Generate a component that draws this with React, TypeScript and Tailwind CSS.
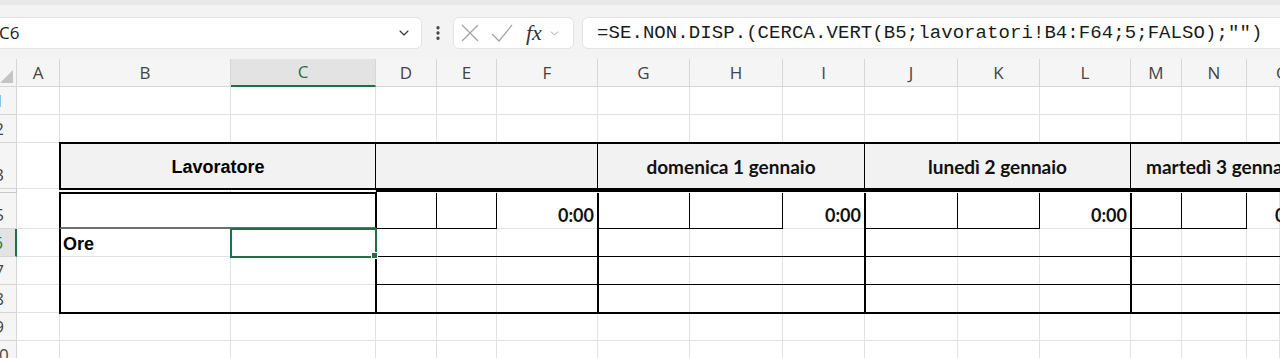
import { Fragment } from 'react';
import { ChevronDown, EllipsisVertical } from 'lucide-react';

const COLS = ['A', 'B', 'C', 'D', 'E', 'F', 'G', 'H', 'I', 'J', 'K', 'L', 'M', 'N', 'O'];
const ROWS = ['1', '2', '3', '4', '5', '6', '7', '8', '9', '10'];

// same tracks for the gridline layer and the table layer
const sheetGrid =
  'grid grid-cols-[17px_43px_171px_145px_61px_60px_101px_92px_93px_82px_93px_82px_91px_51px_65px_1fr] grid-rows-[28px_28px_28px_46px_4px_36px_28px_28px_28px_28px_1fr]';

const uiFont = "font-['Open_Sans','Noto_Sans',sans-serif]";
const cellFont = "font-['Liberation_Sans',Arial,sans-serif]";
const dayFont = "font-['Lato','Liberation_Sans',sans-serif]";

const FormulaBar = () => (
  <div className={`h-[59px] bg-[#f3f3f3] border-t-[5px] border-[#e8e8e8] flex items-start pt-[12px] ${uiFont}`}>
    <div className="-ml-[11px] w-[433px] h-[32px] bg-white border border-[#e3e3e3] rounded-[6px] flex items-center pl-[9px] pr-[9px]">
      <span className="text-[17px] text-[#1a1a1a] flex-1">C6</span>
      <ChevronDown className="w-[16px] h-[16px] text-[#333]" strokeWidth={1.6} />
    </div>
    <div className="w-[31px] h-[32px] flex items-center justify-center">
      <EllipsisVertical className="w-[18px] h-[18px] text-[#444]" strokeWidth={2.4} />
    </div>
    <div className="w-[121px] h-[32px] bg-white border border-[#e3e3e3] rounded-[6px] flex items-center pl-[7px]">
      <svg width="18" height="18" viewBox="0 0 18 18" className="shrink-0">
        <path d="M1 1 L17 17 M17 1 L1 17" stroke="#a3a3a3" strokeWidth="1.2" fill="none" />
      </svg>
      <svg width="22" height="18" viewBox="0 0 22 18" className="shrink-0 ml-[12px]">
        <path d="M1 10 L8 17 L21 1" stroke="#a3a3a3" strokeWidth="1.2" fill="none" />
      </svg>
      <span className="ml-[13px] text-[22px] italic text-[#333] font-['Liberation_Serif',serif] leading-none">fx</span>
      <ChevronDown className="w-[13px] h-[13px] text-[#888] ml-[6px]" strokeWidth={1.4} />
    </div>
    <div className="ml-[8px] flex-1 -mr-[20px] h-[32px] bg-white border border-[#e3e3e3] rounded-[6px] flex items-center pl-[14px]">
      <span className="text-[19px] text-[#1a1a1a] font-['Liberation_Mono',monospace] whitespace-nowrap tracking-[0.07px]">
        =SE.NON.DISP.(CERCA.VERT(B5;lavoratori!B4:F64;5;FALSO);"")
      </span>
    </div>
  </div>
);

const GridLines = () => (
  <div className={`${sheetGrid} [grid-area:1/1] ${uiFont}`}>
    <div className="bg-[#f5f5f5] border-r border-b border-[#d6d6d6] flex items-end justify-end pb-[3px] pr-[3px]">
      <svg width="13" height="13" viewBox="0 0 13 13">
        <path d="M13 0 L13 13 L0 13 Z" fill="#c4c4c4" />
      </svg>
    </div>
    {COLS.map((c) =>
      c === 'C' ? (
        <div key={c} className="bg-[#e3e3e3] border-r border-[#d6d6d6] border-b-2 border-b-[#1e7145] flex items-center justify-center text-[17px] text-[#1e7145]">
          {c}
        </div>
      ) : c === 'O' ? (
        <div key={c} className="bg-[#f5f5f5] border-b border-[#d6d6d6] flex items-center pl-[29px] text-[17px] text-[#444] overflow-hidden">
          {c}
        </div>
      ) : (
        <div key={c} className="bg-[#f5f5f5] border-r border-b border-[#d6d6d6] flex items-center justify-center text-[17px] text-[#444]">
          {c}
        </div>
      )
    )}
    {ROWS.map((r) => (
      <Fragment key={r}>
        {r === '6' ? (
          <div className="bg-[#e3e3e3] border-r-2 border-r-[#1e7145] border-b border-b-[#d6d6d6] overflow-hidden flex items-end justify-end">
            <div className="w-[34px] shrink-0 text-center text-[17px] text-[#1e7145] leading-[27px]">{r}</div>
          </div>
        ) : r === '4' ? (
          <div className="bg-[#f5f5f5] border-r border-b border-[#c8c8c8]" />
        ) : (
          <div className="bg-[#f5f5f5] border-r border-b border-[#d6d6d6] overflow-hidden flex items-end justify-end">
            <div className="w-[34px] shrink-0 text-center text-[17px] text-[#444] leading-[27px]">{r}</div>
          </div>
        )}
        {COLS.map((c) =>
          r === '4' ? (
            <div key={c} className="bg-white border-r border-[#e1e1e1]" />
          ) : (
            <div key={c} className="bg-white border-r border-b border-[#e1e1e1]" />
          )
        )}
      </Fragment>
    ))}
  </div>
);

const DayGroup = ({ start, title, last }: { start: 'D' | 'G' | 'J' | 'M'; title: string; last?: boolean }) => {
  const cls = {
    D: ['col-start-5 col-span-3', 'col-start-5', 'col-start-6', 'col-start-7'],
    G: ['col-start-8 col-span-3', 'col-start-8', 'col-start-9', 'col-start-10'],
    J: ['col-start-11 col-span-3', 'col-start-11', 'col-start-12', 'col-start-13'],
    M: ['col-start-14 col-span-3', 'col-start-14', 'col-start-15', 'col-start-16'],
  }[start];
  const edge = last ? '' : 'border-r-2 -mr-px';
  return (
    <>
      <div className={`${cls[0]} row-start-4 -mt-px -mb-px bg-[#f2f2f2] border-t-2 border-b-2 border-black ${edge} flex items-center overflow-hidden ${last ? 'justify-start pl-[15px]' : 'justify-center'}`}>
        <span className={`${dayFont} font-bold text-[19px] text-[#111] whitespace-nowrap pt-[2px]`}>{title}</span>
      </div>
      <div className={`${cls[0]} row-start-5 bg-black mb-[1px] mt-[1px]`} />
      <div className={`${cls[1]} row-start-6 border-r border-b border-black`} />
      <div className={`${cls[2]} row-start-6 border-r border-b border-black`} />
      <div className={`${cls[3]} row-start-6 ${edge} border-black flex items-end overflow-hidden ${last ? 'justify-start pl-[28px]' : 'justify-end pr-[3px]'}`}>
        <span className={`${dayFont} font-bold text-[18px] text-[#111] leading-[22px] pb-[3px]`}>0:00</span>
      </div>
      <div className={`${cls[0]} row-start-7 border-b border-black ${edge}`} />
      <div className={`${cls[0]} row-start-8 border-b border-black ${edge}`} />
      <div className={`${cls[0]} row-start-9 border-b-2 -mb-px border-black ${edge}`} />
    </>
  );
};

const Table = () => (
  <div className={`${sheetGrid} [grid-area:1/1] ${cellFont}`}>
    <div className="col-start-3 col-span-2 row-start-4 -m-px bg-[#f2f2f2] border-2 border-black flex items-center justify-center">
      <span className="font-bold text-[18px] text-black pt-[2px]">Lavoratore</span>
    </div>
    <div className="col-start-3 col-span-2 row-start-6 -ml-px -mr-px -mt-px bg-white border-2 border-black border-b-[#6e6e6e]" />
    <div className="col-start-3 row-start-7 flex items-end pl-[3px]">
      <span className="font-bold text-[18px] text-black leading-[22px] pb-[2px]">Ore</span>
    </div>
    <div className="col-start-3 col-span-2 row-start-7 row-span-3 -ml-px -mr-px -mb-px border-l-2 border-r-2 border-b-2 border-black" />
    <div className="col-start-4 row-start-7 -m-px relative border-2 border-[#1e7145]">
      <div className="absolute -right-[3px] -bottom-[3px] w-[7px] h-[7px] bg-[#1e7145] border border-white" />
    </div>
    <DayGroup start="D" title="" />
    <DayGroup start="G" title="domenica 1 gennaio" />
    <DayGroup start="J" title="lunedì 2 gennaio" />
    <DayGroup start="M" title="martedì 3 gennaio" last />
  </div>
);

export default function App() {
  return (
    <div className="w-[1280px] h-[358px] overflow-hidden bg-white">
      <FormulaBar />
      <div className="grid h-[299px] overflow-hidden">
        <GridLines />
        <Table />
      </div>
    </div>
  );
}
